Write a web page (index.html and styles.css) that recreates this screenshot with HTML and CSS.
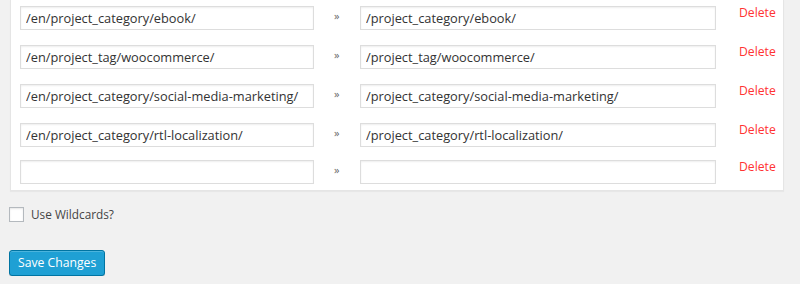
FILE: index.html
```html
<!DOCTYPE html>
<html lang="en">
<head>
    <meta charset="UTF-8">
    <title>Redirects</title>
    <link rel="stylesheet" href="styles.css">
</head>
<body>
    <div class="wrap">
        <div class="redirects">
            <div class="redirect-row">
                <input type="text" class="from" value="/en/project_category/ebook/">
                <span class="arrow">&raquo;</span>
                <input type="text" class="to" value="/project_category/ebook/">
                <a href="#" class="delete">Delete</a>
            </div>
            <div class="redirect-row">
                <input type="text" class="from" value="/en/project_tag/woocommerce/">
                <span class="arrow">&raquo;</span>
                <input type="text" class="to" value="/project_tag/woocommerce/">
                <a href="#" class="delete">Delete</a>
            </div>
            <div class="redirect-row">
                <input type="text" class="from" value="/en/project_category/social-media-marketing/">
                <span class="arrow">&raquo;</span>
                <input type="text" class="to" value="/project_category/social-media-marketing/">
                <a href="#" class="delete">Delete</a>
            </div>
            <div class="redirect-row">
                <input type="text" class="from" value="/en/project_category/rtl-localization/">
                <span class="arrow">&raquo;</span>
                <input type="text" class="to" value="/project_category/rtl-localization/">
                <a href="#" class="delete">Delete</a>
            </div>
            <div class="redirect-row new-row">
                <input type="text" class="from" value="">
                <span class="arrow">&raquo;</span>
                <input type="text" class="to" value="">
                <a href="#" class="delete">Delete</a>
            </div>
        </div>

        <label class="wildcards">
            <input type="checkbox" class="check">
            <span>Use Wildcards?</span>
        </label>

        <p class="submit">
            <button type="submit" class="button-primary">Save Changes</button>
        </p>
    </div>
</body>
</html>
```

FILE: styles.css
```css
body {
    margin: 0;
    background-color: #f1f1f1;
    color: #444;
    font-family: 'Open Sans', sans-serif;
    font-size: 12.2px;
}

.wrap {
    padding: 0 16px 0 9px;
}

.redirects {
    background-color: #fff;
    border: 1px solid #e5e5e5;
    border-top: none;
    box-shadow: 0 1px 1px rgba(0, 0, 0, 0.04);
    margin-left: 1px;
    padding: 6px 0 6px 9px;
    display: flex;
    flex-direction: column;
    gap: 15px;
}

.redirect-row {
    display: grid;
    grid-template-columns: 294px 46px 356px auto;
    align-items: start;
}

.new-row {
    margin-top: -2px;
}

.redirect-row input {
    box-sizing: border-box;
    height: 24px;
    margin: 0;
    padding: 0 5px;
    border: 1px solid #ddd;
    box-shadow: inset 0 1px 2px rgba(0, 0, 0, 0.07);
    background-color: #fff;
    color: #333;
    font-family: 'Open Sans', sans-serif;
    font-size: 12.8px;
    outline: none;
}

.arrow {
    color: #666;
    font-size: 11px;
    line-height: 14px;
    padding-left: 20px;
    margin-top: 3px;
}

.delete {
    color: #f33;
    text-decoration: none;
    line-height: 18px;
    margin: -2px 0 0 23px;
}

.wildcards {
    display: flex;
    align-items: center;
    gap: 7px;
    margin-top: 15px;
    color: #444;
    font-size: 11.8px;
}

.check {
    appearance: none;
    box-sizing: border-box;
    width: 15px;
    height: 15px;
    margin: 0;
    border: 1px solid #b4b9be;
    background-color: #fff;
    box-shadow: inset 0 1px 2px rgba(0, 0, 0, 0.1);
}

.submit {
    margin: 28px 0 0;
}

.button-primary {
    box-sizing: border-box;
    height: 26px;
    padding: 0 8px 1px;
    border: 1px solid #0074a2;
    border-radius: 3px;
    background-color: #1fa0d4;
    box-shadow: inset 0 1px 0 rgba(120, 200, 230, 0.5), 0 1px 0 rgba(0, 0, 0, 0.15);
    color: #fff;
    font-family: 'Open Sans', sans-serif;
    font-size: 12.2px;
    line-height: 22px;
    cursor: pointer;
}
```
